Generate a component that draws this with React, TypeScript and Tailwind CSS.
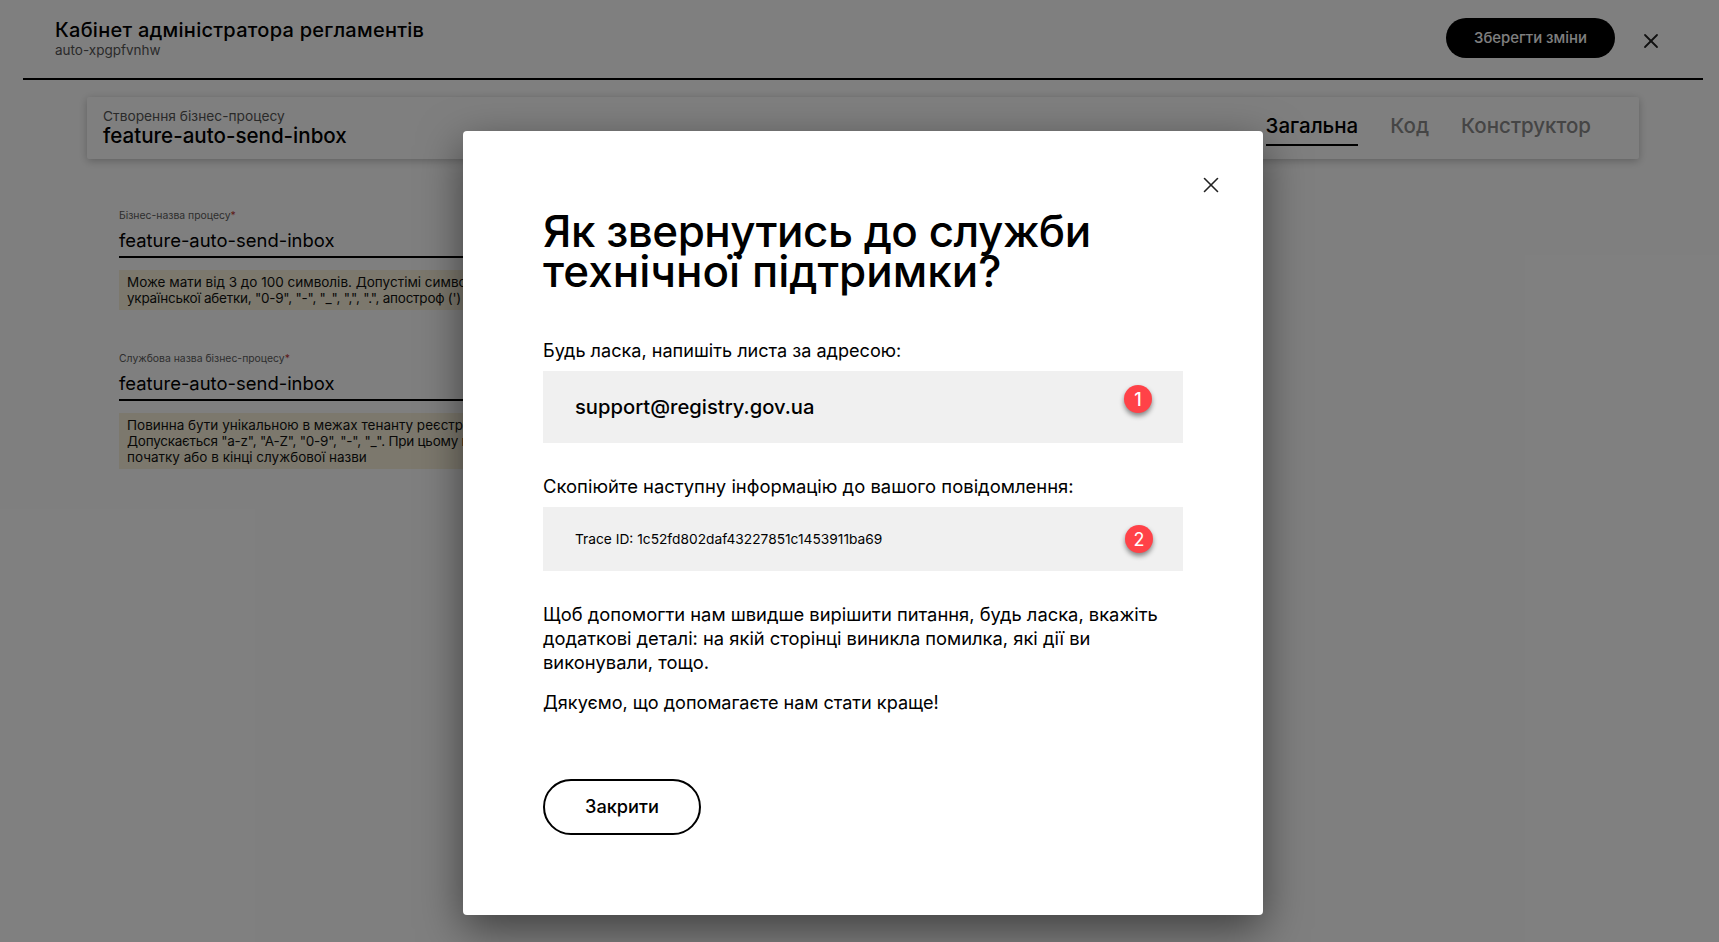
import { X } from 'lucide-react';

const FONT = "font-['Inter','Noto_Sans',sans-serif]";

function Field({ label, value, hint, className }: { label: string; value: string; hint: string[]; className?: string }) {
  return (
    <div className={`w-[680px] ${className ?? ''}`}>
      <div className="text-[10.4px] leading-[14px] text-[#5c5c5c]">
        {label}
        <span className="text-[#b33]">*</span>
      </div>
      <div className="mt-[4px] h-[31px] border-b-2 border-black text-[18.45px] leading-[26px] text-black">{value}</div>
      <div className="mt-[12px] bg-[#f8f1da] px-[8px] py-[4px] text-[13.5px] leading-[16px] text-[#111]">
        {hint.map((line) => (
          <div key={line} className={line.includes('"') ? 'tracking-[-0.25px]' : ''}>
            {line}
          </div>
        ))}
      </div>
    </div>
  );
}

function Badge({ n }: { n: number }) {
  return (
    <span className="flex h-[28px] w-[28px] items-center justify-center rounded-full bg-[#ff4248] text-[18px] text-white shadow-[0_3px_5px_rgba(0,0,0,0.45)]">
      {n}
    </span>
  );
}

export default function App() {
  return (
    <div className={`relative h-[942px] w-[1719px] overflow-hidden bg-white text-black ${FONT}`}>
      <div className="pl-[23px] pr-[16px]">
        <header className="box-content flex h-[78px] items-start justify-between border-b-2 border-black pl-[32px] pr-[40px]">
          <div className="pt-[18px]">
            <div className="text-[20px] leading-[24px] font-medium tracking-[0.26px]">Кабінет адміністратора регламентів</div>
            <div className="text-[13.5px] leading-[16px] text-[#555]">auto-xpgpfvnhw</div>
          </div>
          <div className="flex items-center gap-[24px] pt-[18px]">
            <button className="h-[40px] w-[169px] rounded-full bg-black text-[14.9px] font-medium text-white">Зберегти зміни</button>
            <X className="mt-[6px] h-[24px] w-[24px] text-[#222]" strokeWidth={1.8} />
          </div>
        </header>

        <section className="mx-[64px] mt-[17px] flex h-[62px] items-center justify-between rounded-[2px] bg-white pl-[16px] pr-[48px] shadow-[0_2px_8px_rgba(0,0,0,0.25)]">
          <div>
            <div className="text-[13.75px] leading-[16px] text-[#555]">Створення бізнес-процесу</div>
            <div className="text-[20.55px] leading-[24px] font-medium">feature-auto-send-inbox</div>
          </div>
          <nav className="flex gap-[32px] pt-[4px] text-[20.5px] font-medium leading-[24px] text-[#8a8a8a]">
            <span className="border-b-2 border-black pb-[6px] text-black">Загальна</span>
            <span className="pb-[6px]">Код</span>
            <span className="pb-[6px]">Конструктор</span>
          </nav>
        </section>

        <div className="ml-[96px] mt-[50px]">
          <Field
            label="Бізнес-назва процесу"
            value="feature-auto-send-inbox"
            hint={['Може мати від 3 до 100 символів. Допустімі символи: літери', 'української абетки, "0-9", "-", "_", ",", ".", апостроф (\')']}
          />
          <Field
            className="mt-[42px]"
            label="Службова назва бізнес-процесу"
            value="feature-auto-send-inbox"
            hint={[
              'Повинна бути унікальною в межах тенанту реєстру.',
              'Допускається "a-z", "A-Z", "0-9", "-", "_". При цьому цифри заборонені на',
              'початку або в кінці службової назви',
            ]}
          />
        </div>
      </div>

      <div className="absolute inset-0 flex justify-center bg-black/50 pl-[7px] pt-[131px]">
        <div className="relative h-[784px] w-[800px] rounded-[4px] bg-white px-[80px] pt-[80px] shadow-[0_14px_44px_rgba(0,0,0,0.5)]">
          <X className="absolute right-[39px] top-[41px] h-[26px] w-[26px] text-[#222]" strokeWidth={1.5} />
          <h1 className="text-[44px] font-medium leading-[40px]">
            <span className="tracking-[-0.5px]">Як звернутись до служби</span>
            <br />
            технічної підтримки?
          </h1>
          <p className="mt-[47px] text-[18.1px] leading-[24px]">Будь ласка, напишіть листа за адресою:</p>
          <div className="relative mt-[9px] flex h-[72px] items-center bg-[#f0f0f0] pl-[32px] text-[20.2px] font-medium">
            support@registry.gov.ua
            <span className="absolute right-[31px] top-[14px]">
              <Badge n={1} />
            </span>
          </div>
          <p className="mt-[31px] text-[18.45px] leading-[24px]">Скопіюйте наступну інформацію до вашого повідомлення:</p>
          <div className="relative mt-[9px] flex h-[64px] items-center bg-[#f0f0f0] pl-[32px] text-[13.75px]">
            Trace ID: 1c52fd802daf43227851c1453911ba69
            <span className="absolute right-[30px] top-[18px]">
              <Badge n={2} />
            </span>
          </div>
          <p className="mt-[31px] text-[18.33px] leading-[24px]">
            Щоб допомогти нам швидше вирішити питання, будь ласка, вкажіть додаткові деталі: на якій сторінці виникла помилка, які дії ви виконували, тощо.
          </p>
          <p className="mt-[16px] text-[18.1px] leading-[24px]">Дякуємо, що допомагаєте нам стати краще!</p>
          <button className="mt-[65px] h-[56px] w-[158px] rounded-full border-2 border-black pb-[1px] text-[18.2px] font-medium">Закрити</button>
        </div>
      </div>
    </div>
  );
}
